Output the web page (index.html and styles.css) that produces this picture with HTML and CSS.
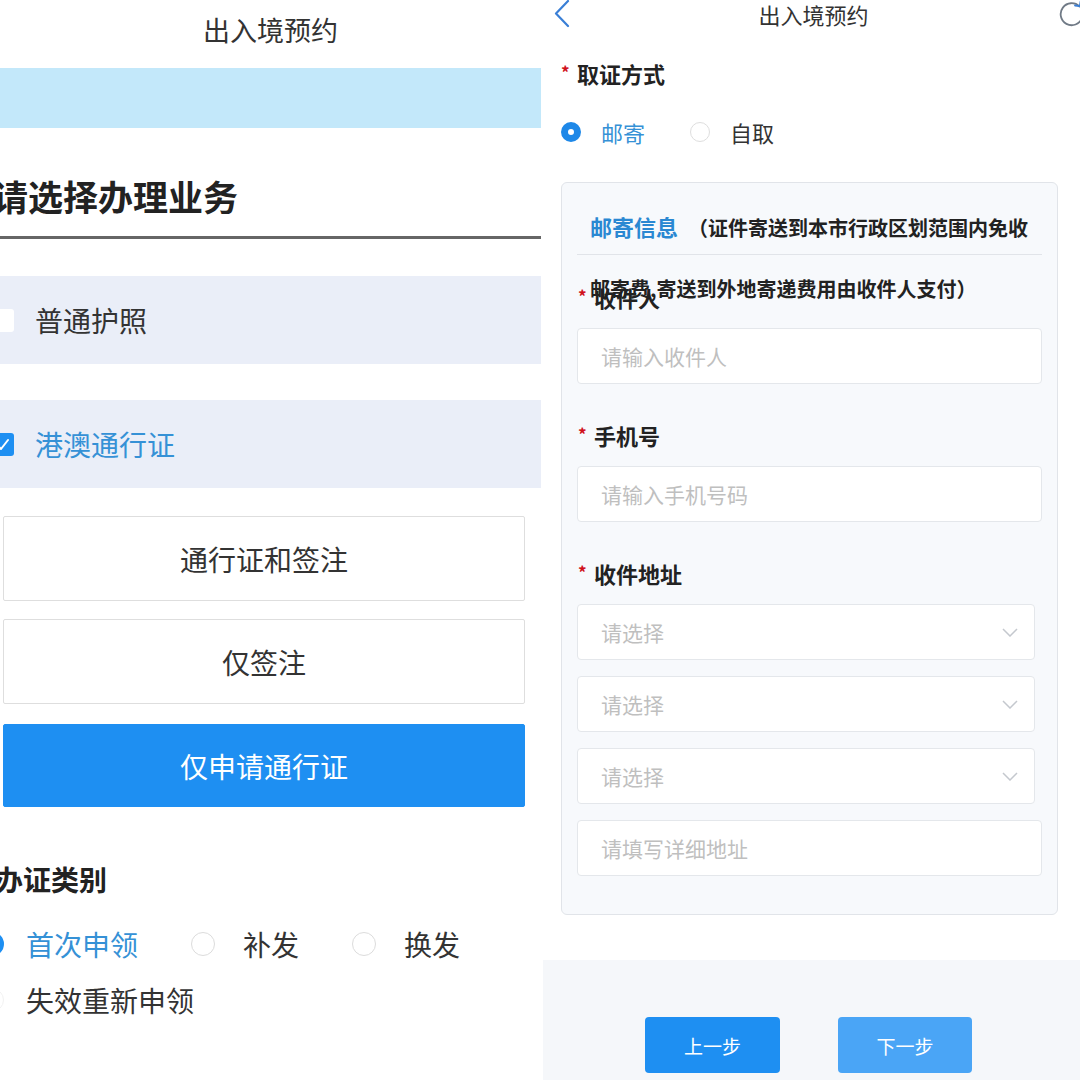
FILE: index.html
```html
<!DOCTYPE html>
<html lang="zh-CN">
<head>
    <meta charset="UTF-8">
    <meta name="viewport" content="width=device-width, initial-scale=1.0">
    <title>出入境预约</title>
    <link rel="stylesheet" href="styles.css">
</head>
<body>
<div class="screens">

    <!-- step 1: choose business -->
    <div class="screen screen-business">
        <div class="nav-bar">
            <span class="nav-title">出入境预约</span>
        </div>
        <div class="notice-band"></div>

        <h2 class="section-title">请选择办理业务</h2>

        <div class="doc-item">
            <span class="checkbox"></span>
            <span class="doc-name">普通护照</span>
        </div>
        <div class="doc-item is-checked">
            <span class="checkbox">
                <svg width="23" height="23" viewBox="0 0 23 23"><polyline points="6,12 10,16 17,7" fill="none" stroke="#fff" stroke-width="2" stroke-linecap="round" stroke-linejoin="round"/></svg>
            </span>
            <span class="doc-name">港澳通行证</span>
        </div>

        <div class="option-list">
            <div class="option-btn">通行证和签注</div>
            <div class="option-btn">仅签注</div>
            <div class="option-btn is-active">仅申请通行证</div>
        </div>

        <h3 class="group-title">办证类别</h3>
        <div class="apply-type">
            <label class="radio-item is-checked"><span class="radio"></span>首次申领</label>
            <label class="radio-item"><span class="radio"></span>补发</label>
            <label class="radio-item"><span class="radio"></span>换发</label>
            <label class="radio-item"><span class="radio"></span>失效重新申领</label>
        </div>
    </div>

    <!-- step 2: delivery info -->
    <div class="screen screen-delivery">
        <div class="top-nav">
            <svg class="nav-back" width="18" height="28" viewBox="0 0 18 28"><polyline points="15,1 3,13.5 15,26" fill="none" stroke="#3a7fd6" stroke-width="2.2" stroke-linecap="round" stroke-linejoin="round"/></svg>
            <span class="top-title">出入境预约</span>
            <svg class="nav-refresh" width="30" height="30" viewBox="0 0 30 30">
                <path d="M23.5 7.5 A11 11 0 1 0 26 19" fill="none" stroke="#707a86" stroke-width="1.8" stroke-linecap="round"/>
                <polyline points="19,6.5 23.8,7.2 24.6,2.5" fill="none" stroke="#3a7fd6" stroke-width="1.8" stroke-linecap="round" stroke-linejoin="round"/>
            </svg>
        </div>

        <div class="field-label top-label"><span class="required">*</span>取证方式</div>
        <div class="pick-type">
            <label class="pick-item is-checked"><span class="dot"></span>邮寄</label>
            <label class="pick-item"><span class="dot"></span>自取</label>
        </div>

        <div class="mail-card">
            <div class="mail-head">
                <span class="mail-title">邮寄信息</span><span class="mail-note">（证件寄送到本市行政区划范围内免收邮寄费,寄送到外地寄递费用由收件人支付）</span>
            </div>

            <div class="field-label"><span class="required">*</span>收件人</div>
            <div class="text-input">请输入收件人</div>

            <div class="field-label spaced"><span class="required">*</span>手机号</div>
            <div class="text-input">请输入手机号码</div>

            <div class="field-label spaced"><span class="required">*</span>收件地址</div>
            <div class="text-input select-input">请选择
                <svg width="16" height="9" viewBox="0 0 16 9"><polyline points="1,1 8,8 15,1" fill="none" stroke="#c4c8ce" stroke-width="1.5"/></svg>
            </div>
            <div class="text-input select-input">请选择
                <svg width="16" height="9" viewBox="0 0 16 9"><polyline points="1,1 8,8 15,1" fill="none" stroke="#c4c8ce" stroke-width="1.5"/></svg>
            </div>
            <div class="text-input select-input">请选择
                <svg width="16" height="9" viewBox="0 0 16 9"><polyline points="1,1 8,8 15,1" fill="none" stroke="#c4c8ce" stroke-width="1.5"/></svg>
            </div>
            <div class="text-input">请填写详细地址</div>
        </div>

        <div class="step-bar">
            <button class="step-btn">上一步</button>
            <button class="step-btn step-next">下一步</button>
        </div>
    </div>

</div>
</body>
</html>
```

FILE: styles.css
```css
* {
    box-sizing: border-box;
}

body {
    margin: 0;
    background: #fff;
    font-family: "Noto Sans CJK SC", "Noto Sans", sans-serif;
    color: #333;
}

.screens {
    display: flex;
    width: 1080px;
    height: 1080px;
    overflow: hidden;
}

.screen {
    height: 1080px;
    overflow: hidden;
    background: #fff;
}

/* ---------- left screen ---------- */

.screen-business {
    width: 541px;
}

.nav-bar {
    height: 68px;
    text-align: center;
}

.nav-title {
    font-size: 27px;
    line-height: 60px;
    color: #333;
}

.notice-band {
    height: 60px;
    background: #c3e8fa;
}

.section-title {
    margin: 48px 0 0 -7px;
    padding-bottom: 20px;
    font-size: 35px;
    line-height: 40px;
    font-weight: 700;
    color: #222;
    border-bottom: 3px solid #666;
}

.doc-item {
    display: flex;
    align-items: center;
    height: 88px;
    margin-top: 37px;
    background: #eaeef8;
    font-size: 28px;
    color: #333;
}

.doc-item + .doc-item {
    margin-top: 36px;
}

.checkbox {
    width: 23px;
    height: 23px;
    margin-left: -9px;
    margin-right: 21px;
    background: #fff;
    border-radius: 3px;
}

.checkbox svg {
    display: block;
}

.doc-item.is-checked .checkbox {
    background: #1e8ff2;
}

.doc-item.is-checked .doc-name {
    color: #3591d6;
}

.option-list {
    display: flex;
    flex-direction: column;
    gap: 18px;
    margin: 28px 16px 0 3px;
}

.option-btn {
    display: flex;
    align-items: center;
    justify-content: center;
    height: 85px;
    border: 1px solid #dedede;
    border-radius: 2px;
    font-size: 28px;
    color: #333;
}

.option-btn.is-active {
    height: 83px;
    margin-top: 2px;
    background: #1e8ff2;
    border-color: #1e8ff2;
    color: #fff;
}

.group-title {
    margin: 54px 0 0 -5px;
    font-size: 28px;
    line-height: 36px;
    font-weight: 700;
    color: #222;
}

.apply-type {
    display: flex;
    flex-wrap: wrap;
    column-gap: 53px;
    row-gap: 16px;
    margin: 27px 0 0 -20px;
}

.radio-item {
    display: flex;
    align-items: center;
    font-size: 28px;
    line-height: 40px;
    color: #333;
}

.radio {
    width: 24px;
    height: 24px;
    margin-right: 28px;
    border: 1px solid #dcdcdc;
    border-radius: 50%;
    background: #fff;
}

.radio-item:last-child .radio {
    margin-right: 22px;
    border-color: #f2f2f2;
}

.radio-item.is-checked {
    color: #3591d6;
}

.radio-item.is-checked .radio {
    margin-right: 22px;
    border: 7px solid #1e8ff2;
}

/* ---------- right screen ---------- */

.screen-delivery {
    display: flex;
    flex-direction: column;
    width: 539px;
}

.top-nav {
    display: flex;
    align-items: center;
    height: 28px;
    padding-left: 12px;
}

.nav-back {
    flex: none;
}

.top-title {
    flex: 1;
    text-align: center;
    font-size: 22px;
    line-height: 28px;
    color: #333;
}

.nav-refresh {
    flex: none;
    margin-right: -6px;
}

.field-label {
    display: flex;
    align-items: center;
    font-size: 22px;
    line-height: 30px;
    font-weight: 700;
    color: #222;
}

.required {
    width: 16px;
    font-size: 17px;
    color: #d0101b;
    position: relative;
    top: -1px;
}

.top-label {
    margin-top: 30px;
    padding-left: 20px;
}

.pick-type {
    display: flex;
    gap: 45px;
    margin-top: 24px;
    padding-left: 20px;
}

.pick-item {
    display: flex;
    align-items: center;
    font-size: 22px;
    line-height: 40px;
    color: #333;
}

.dot {
    width: 20px;
    height: 20px;
    margin-right: 20px;
    border: 1px solid #dedede;
    border-radius: 50%;
    background: #fff;
}

.pick-item.is-checked {
    color: #3591d6;
}

.pick-item.is-checked .dot {
    border: 7px solid #1e88e8;
}

.mail-card {
    margin: 30px 22px 0 20px;
    padding: 0 15px 38px;
    background: #f7f9fc;
    border: 1px solid #e1e4e9;
    border-radius: 6px;
}

.mail-head {
    height: 72px;
    padding: 13px 8px 0 13px;
    border-bottom: 1px solid #e1e4e9;
    line-height: 60px;
    font-weight: 700;
}

.mail-title {
    margin-right: 10px;
    font-size: 22px;
    color: #2a88d2;
}

.mail-note {
    font-size: 20px;
    color: #222;
}

.mail-card .field-label {
    margin-top: 27px;
    padding-left: 1px;
}

.mail-card .field-label.spaced {
    margin-top: 36px;
}

.text-input {
    display: flex;
    align-items: center;
    justify-content: space-between;
    height: 56px;
    margin-top: 16px;
    padding: 0 16px 0 23px;
    background: #fff;
    border: 1px solid #e4e7eb;
    border-radius: 4px;
    font-size: 21px;
    color: #bfbfbf;
}

.select-input {
    margin-right: 7px;
}

.step-bar {
    flex: 1;
    display: flex;
    justify-content: center;
    gap: 58px;
    margin: 45px 0 0 2px;
    padding: 57px 6px 0 0;
    background: #f5f7fa;
}

.step-btn {
    width: 135px;
    height: 56px;
    border: none;
    border-radius: 4px;
    background: #1e8ff2;
    color: #fff;
    font-family: inherit;
    font-size: 19px;
}

.step-next {
    width: 134px;
    background: #4aa5f6;
}
```
